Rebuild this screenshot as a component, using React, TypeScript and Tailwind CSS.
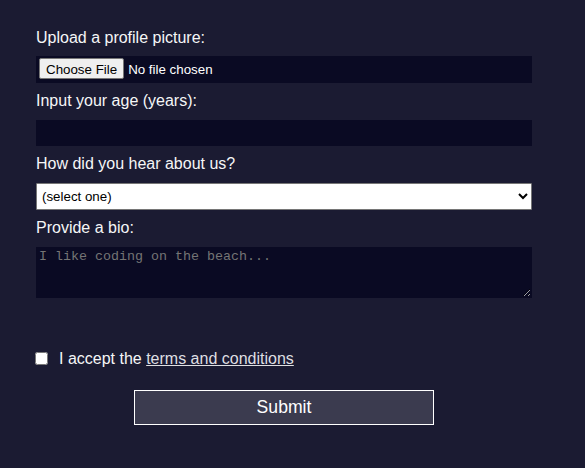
import React from 'react';

export default function App() {
  return (
    <div className="min-h-[468px] w-full bg-[#1b1b32] text-[#f5f6f7] font-['Liberation_Sans',Arial,sans-serif] text-[16px] leading-[19px]">
      <div className="w-[568px]">
        <form className="mx-auto w-[496px] pt-[28px]" onSubmit={(e) => e.preventDefault()}>
          <label className="block">
            Upload a profile picture:
            <input
              type="file"
              className="mt-[9px] block h-[27px] w-full bg-[#0a0a23] px-[3px] pt-[2px] pb-[3px] text-[13.33px] leading-[22px] text-white file:mr-[4px] file:h-[21px] file:rounded-[2px] file:border file:border-solid file:border-[#767676] file:bg-[#efefef] file:px-[6px] file:text-[13.33px] file:text-black"
            />
          </label>
          <label className="mt-[8px] block">
            Input your age (years):
            <input type="number" min={13} max={120} className="mt-[10px] block h-[26px] w-full border border-[#0a0a23] bg-[#0a0a23] text-white" />
          </label>
          <label className="mt-[8px] block">
            How did you hear about us?
            <select className="mt-[10px] block h-[27px] w-full rounded-[1px] border border-[#767676] bg-white px-[1px] font-['Liberation_Sans',Arial,sans-serif] text-[13.33px] text-black">
              <option value="">(select one)</option>
              <option value="1">freeCodeCamp News</option>
              <option value="2">freeCodeCamp YouTube Channel</option>
              <option value="3">freeCodeCamp Forum</option>
              <option value="4">Other</option>
            </select>
          </label>
          <label className="mt-[8px] block">
            Provide a bio:
            <textarea
              rows={3}
              placeholder="I like coding on the beach..."
              className="mt-[10px] block h-[51px] w-full border border-[#0a0a23] bg-[#0a0a23] px-[2px] py-[1px] font-['Liberation_Mono','DejaVu_Sans_Mono',monospace] text-[13.33px] leading-[16px] text-white placeholder:text-[#757575]"
            />
          </label>

          <label className="mt-[51px] flex items-center">
            <input type="checkbox" required className="ml-[-1px] mr-[11px] h-[13px] w-[13px]" />
            <span>
              I accept the{' '}
              <a href="#" className="text-[#dfdfe2] underline">
                terms and conditions
              </a>
            </span>
          </label>

          <input
            type="submit"
            value="Submit"
            className="mx-auto mt-[22px] block h-[35px] w-[300px] border border-white bg-[#3b3b4f] text-[17.6px] text-white"
          />
        </form>
      </div>
    </div>
  );
}
